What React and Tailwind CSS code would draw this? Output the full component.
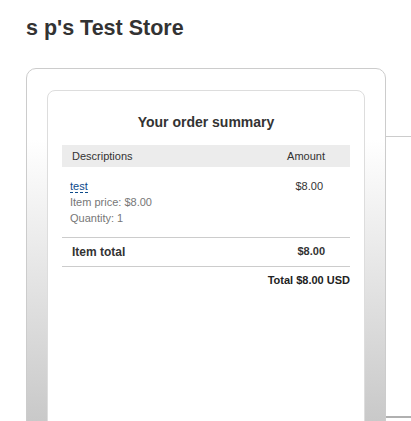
import React from 'react';

const items = [{ id: 1, name: 'test', price: '$8.00', qty: 1, amount: '$8.00' }];

function OrderSummary() {
  return (
    <div className="bg-white border border-[#dddddd] rounded-[8px] h-[400px] px-[14px] pt-[22px]">
      <h2 className="text-center text-[14px] font-bold text-[#333] leading-[18px]">Your order summary</h2>

      <table className="w-full mt-[14px] text-[11px] text-[#333] border-collapse">
        <thead>
          <tr className="bg-[#ececec] h-[22px]">
            <th className="text-left font-normal pl-[10px]">Descriptions</th>
            <th className="text-right font-normal pr-[25px]">Amount</th>
          </tr>
        </thead>
        <tbody>
          {items.map((item) => (
            <tr key={item.id} className="border-b border-[#cccccc] align-top">
              <td className="pl-[8px] pt-[11px] pb-[11px]">
                <a href="#" className="text-[#0b4a8b] border-b border-dashed border-[#0b4a8b] leading-[12px] inline-block">
                  {item.name}
                </a>
                <div className="text-[#777] -mt-[1px] leading-[16px]">Item price: {item.price}</div>
                <div className="text-[#777] leading-[16px]">Quantity: {item.qty}</div>
              </td>
              <td className="text-right pr-[27px] pt-[11px]">{item.amount}</td>
            </tr>
          ))}
          <tr className="border-b border-[#cccccc] h-[29px] font-bold">
            <td className="pl-[10px] text-[12px]">Item total</td>
            <td className="text-right pr-[25px]">$8.00</td>
          </tr>
        </tbody>
      </table>

      <div className="text-right text-[11px] font-bold text-[#222] mt-[5px]">Total $8.00 USD</div>
    </div>
  );
}

export default function App() {
  return (
    <div className="h-[421px] overflow-hidden bg-white font-['Liberation_Sans',Arial,sans-serif]">
      <h1 className="pl-[26px] pt-[14px] text-[21.5px] font-bold text-[#333] leading-[28px]">s p's Test Store</h1>

      <div className="flex items-start pl-[26px] mt-[26px]">
        <div className="w-[360px] shrink-0 h-[420px] border border-[#cccccc] rounded-[10px] px-[20px] pt-[21px] bg-[linear-gradient(to_bottom,#ffffff_17%,#c0c0c0_95%)]">
          <OrderSummary />
        </div>
        <div className="flex-1 mt-[68px] h-[282px] border-t border-[#cccccc] border-b-2 border-b-[#b0b0b0]" />
      </div>
    </div>
  );
}
